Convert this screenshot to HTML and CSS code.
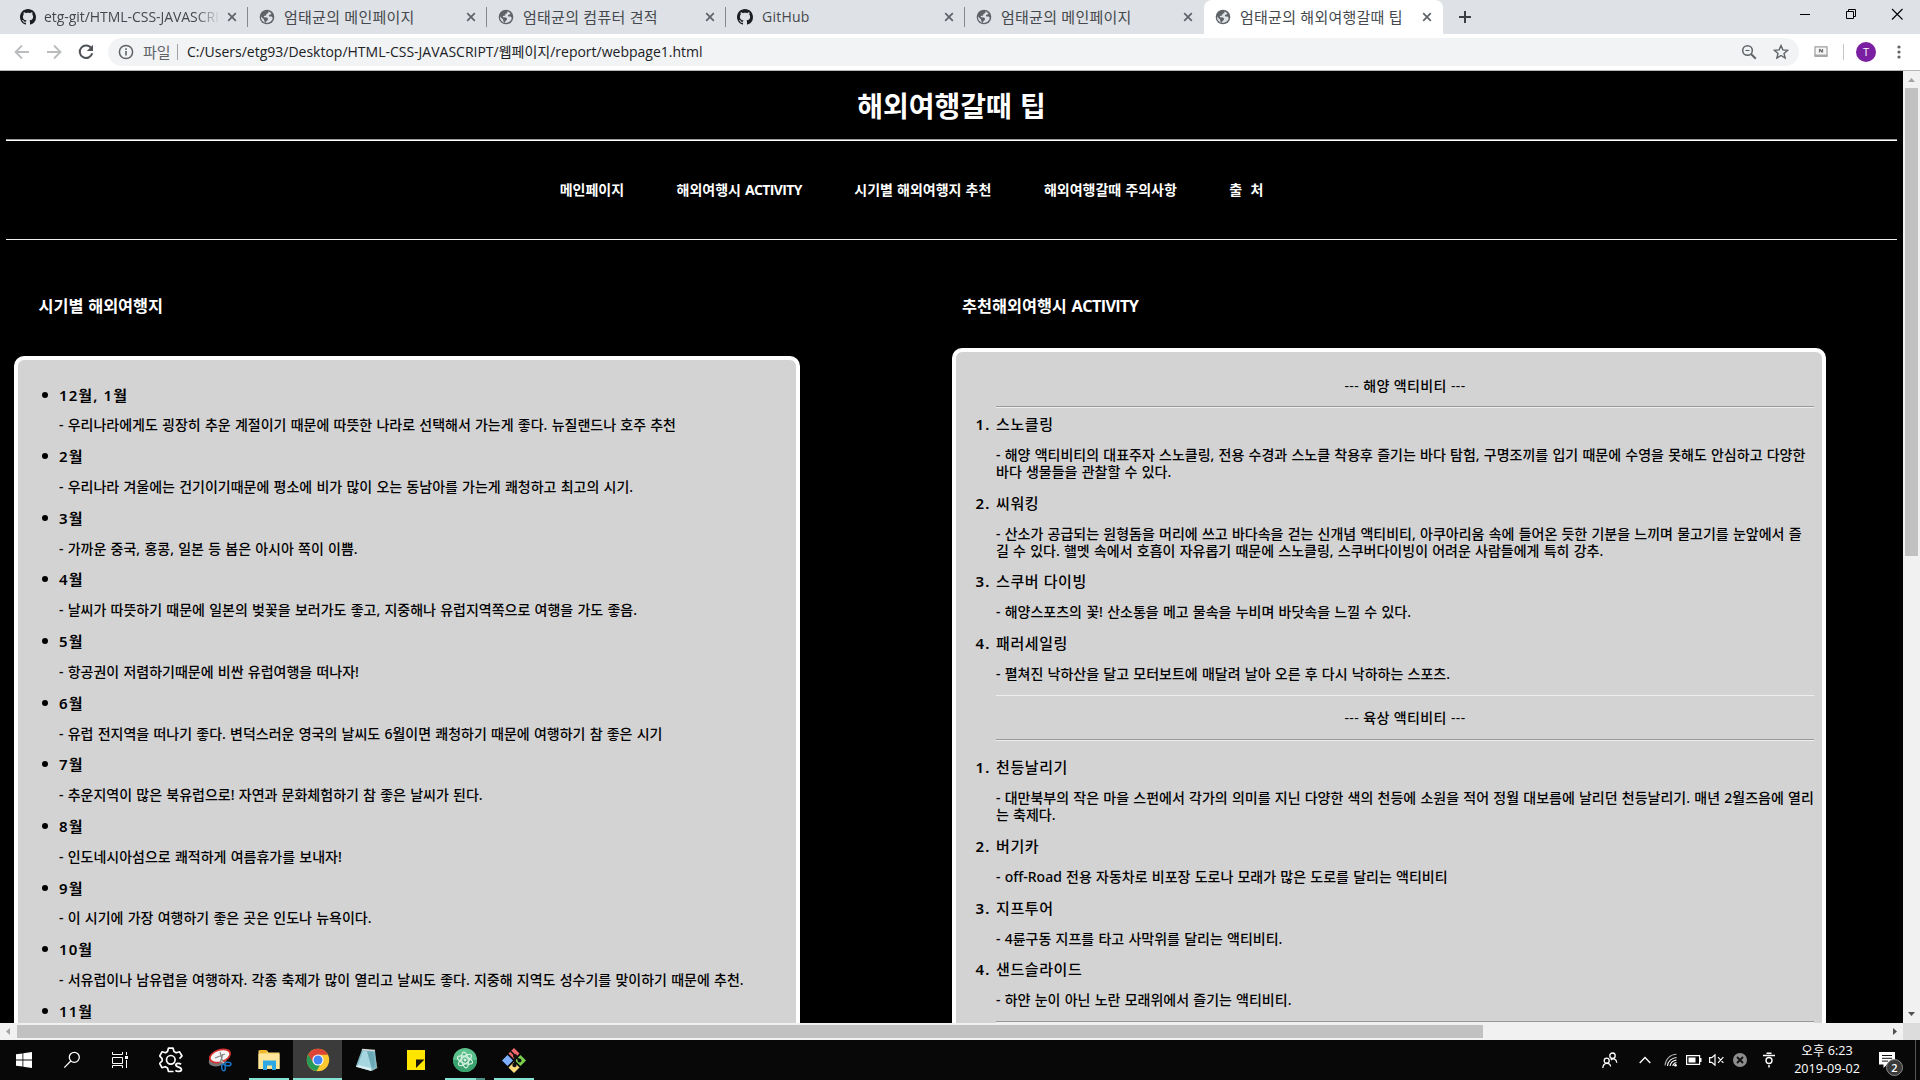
FILE: index.html
```html
<!DOCTYPE html>
<html lang="ko">
<head>
<meta charset="utf-8">
<title>엄태균의 해외여행갈때 팁</title>
<link rel="stylesheet" href="styles.css">
</head>
<body>
<svg class="defs" width="0" height="0" aria-hidden="true">
  <symbol id="github" viewBox="0 0 16 16"><path fill="#1b1f23" d="M8 0C3.58 0 0 3.58 0 8c0 3.54 2.29 6.53 5.47 7.59.4.07.55-.17.55-.38 0-.19-.01-.82-.01-1.49-2.01.37-2.53-.49-2.69-.94-.09-.23-.48-.94-.82-1.13-.28-.15-.68-.52-.01-.53.63-.01 1.08.58 1.23.82.72 1.21 1.87.87 2.33.66.07-.52.28-.87.51-1.07-1.78-.2-3.64-.89-3.64-3.95 0-.87.31-1.59.82-2.15-.08-.2-.36-1.02.08-2.12 0 0 .67-.21 2.2.82.64-.18 1.32-.27 2-.27s1.36.09 2 .27c1.53-1.04 2.2-.82 2.2-.82.44 1.1.16 1.92.08 2.12.51.56.82 1.27.82 2.15 0 3.07-1.87 3.75-3.65 3.95.29.25.54.73.54 1.48 0 1.07-.01 1.93-.01 2.2 0 .21.15.46.55.38A8.01 8.01 0 0 0 16 8c0-4.42-3.58-8-8-8z"/></symbol>
  <symbol id="globe" viewBox="0 0 16 16"><circle cx="8" cy="8" r="7.3" fill="#5f6368"/><path fill="#dee1e6" d="M9.6 2.2 9.3 4 7.4 4.9 7.2 6.5 4.8 7.1 5 8.3 8 8.4 9.2 9.8 8.6 11.2 7.4 12 7.1 14 A6 6 0 0 1 2 7.6 L5 10.4 5.4 12.4 7 13.9 A6 6 0 0 0 13.8 9 L12.6 7.6 10.2 7.4 9.9 6 12.6 5 A6 6 0 0 0 9.6 2.2z"/></symbol>
  <symbol id="close" viewBox="0 0 10 10"><path d="M1.2 1.2l7.6 7.6M8.8 1.2L1.2 8.8" stroke="#5f6368" stroke-width="1.7" fill="none"/></symbol>
</svg>

<div class="tabs">
  <div class="tab"><svg class="fav"><use href="#github"/></svg><span class="tab-title fade">etg-git/HTML-CSS-JAVASCRIPT</span><svg class="x"><use href="#close"/></svg></div>
  <div class="tab"><svg class="fav"><use href="#globe"/></svg><span class="tab-title">엄태균의 메인페이지</span><svg class="x"><use href="#close"/></svg></div>
  <div class="tab"><svg class="fav"><use href="#globe"/></svg><span class="tab-title">엄태균의 컴퓨터 견적</span><svg class="x"><use href="#close"/></svg></div>
  <div class="tab"><svg class="fav"><use href="#github"/></svg><span class="tab-title latin">GitHub</span><svg class="x"><use href="#close"/></svg></div>
  <div class="tab last"><svg class="fav"><use href="#globe"/></svg><span class="tab-title">엄태균의 메인페이지</span><svg class="x"><use href="#close"/></svg></div>
  <div class="tab active"><svg class="fav"><use href="#globe"/></svg><span class="tab-title">엄태균의 해외여행갈때 팁</span><svg class="x"><use href="#close"/></svg></div>
  <svg class="plus" width="14" height="14" viewBox="0 0 14 14"><path d="M7 1v12M1 7h12" stroke="#3c4043" stroke-width="2"/></svg>
  <div class="window-buttons">
    <svg width="46" height="28" viewBox="0 0 46 28"><path d="M18 14.5h10" stroke="#000"/></svg>
    <svg width="46" height="28" viewBox="0 0 46 28"><path d="M18.500 11.500h7v7h-7zM20.500 11.500v-2h7v7h-2" stroke="#000" fill="none"/></svg>
    <svg width="46" height="28" viewBox="0 0 46 28"><path d="M18 9l10.500 10.500M28.500 9L18 19.500" stroke="#000" stroke-width="1.100"/></svg>
  </div>
</div>

<div class="toolbar">
  <div class="nav-buttons">
    <svg width="16" height="16" viewBox="0 0 16 16"><path d="M15 8H2M8 1.500L1.500 8 8 14.500" stroke="#babcbe" stroke-width="1.800" fill="none"/></svg>
    <svg width="16" height="16" viewBox="0 0 16 16"><path d="M1 8h13M8 1.500L14.500 8 8 14.500" stroke="#babcbe" stroke-width="1.800" fill="none"/></svg>
    <svg width="16" height="16" viewBox="0 0 16 16"><path d="M13.500 4.500A6.300 6.300 0 1 0 14.200 9.200" stroke="#4f5358" stroke-width="2" fill="none"/><path d="M15 .8V7H8.800z" fill="#4f5358"/></svg>
  </div>
  <div class="omnibox">
    <svg width="16" height="16" viewBox="0 0 16 16"><circle cx="8" cy="8" r="6.600" stroke="#5f6368" stroke-width="1.500" fill="none"/><path d="M8 7v4.500M8 4.300v1.700" stroke="#5f6368" stroke-width="1.600"/></svg>
    <span class="scheme">파일</span>
    <span class="url">C:/Users/etg93/Desktop/HTML-CSS-JAVASCRIPT/웹페이지/report/webpage1.html</span>
    <svg class="mag" width="16" height="16" viewBox="0 0 16 16"><circle cx="6.500" cy="6.500" r="4.800" stroke="#5f6368" stroke-width="1.500" fill="none"/><path d="M10 10l4.800 4.800" stroke="#5f6368" stroke-width="2"/><path d="M4.500 6.500h4" stroke="#5f6368" stroke-width="1.100"/></svg>
    <svg width="16" height="16" viewBox="0 0 16 16"><path d="M8 1.600l1.900 4.300 4.700.4-3.600 3.100 1.100 4.600L8 11.500 3.900 14 5 9.400 1.400 6.300l4.700-.4z" stroke="#5f6368" stroke-width="1.400" fill="none"/></svg>
  </div>
  <svg class="ext" width="14" height="12" viewBox="0 0 14 12"><path d="M1 .8h12v8.700H1z" stroke="#9b9d9f" stroke-width="1.200" fill="#f7f7f7"/><path d="M.4 8.500h13.200V11H.4z" fill="#a5a7a9"/><path d="M5.500 3v3.500M8.500 3v3.500M5.500 3l3 3.500" stroke="#777" stroke-width="1.300"/></svg>
  <span class="divider"></span>
  <span class="avatar">T</span>
  <svg class="menu" width="4" height="16" viewBox="0 0 4 16"><g fill="#5f6368"><circle cx="2" cy="3" r="1.600"/><circle cx="2" cy="8" r="1.600"/><circle cx="2" cy="13" r="1.600"/></g></svg>
</div>

<div class="viewport">
  <main class="page">
    <h1>해외여행갈때 팁</h1>
    <hr class="rule">
    <nav>
      <a>메인페이지</a><a>해외여행시 <span class="caps">ACTIVITY</span></a><a>시기별 해외여행지 추천</a><a>해외여행갈때 주의사항</a><a>출&nbsp; 처</a>
    </nav>
    <hr class="rule thin">
    <div class="columns">
      <section class="season">
        <h2>시기별 해외여행지</h2>
        <div class="box">
          <ul>
            <li><h3>12월, 1월</h3><p>- 우리나라에게도 굉장히 추운 계절이기 때문에 따뜻한 나라로 선택해서 가는게 좋다. 뉴질랜드나 호주 추천</p></li>
            <li><h3>2월</h3><p>- 우리나라 겨울에는 건기이기때문에 평소에 비가 많이 오는 동남아를 가는게 쾌청하고 최고의 시기.</p></li>
            <li><h3>3월</h3><p>- 가까운 중국, 홍콩, 일본 등 봄은 아시아 쪽이 이쁨.</p></li>
            <li><h3>4월</h3><p>- 날씨가 따뜻하기 때문에 일본의 벚꽃을 보러가도 좋고, 지중해나 유럽지역쪽으로 여행을 가도 좋음.</p></li>
            <li><h3>5월</h3><p>- 항공권이 저렴하기때문에 비싼 유럽여행을 떠나자!</p></li>
            <li><h3>6월</h3><p>- 유럽 전지역을 떠나기 좋다. 변덕스러운 영국의 날씨도 6월이면 쾌청하기 때문에 여행하기 참 좋은 시기</p></li>
            <li><h3>7월</h3><p>- 추운지역이 많은 북유럽으로! 자연과 문화체험하기 참 좋은 날씨가 된다.</p></li>
            <li><h3>8월</h3><p>- 인도네시아섬으로 쾌적하게 여름휴가를 보내자!</p></li>
            <li><h3>9월</h3><p>- 이 시기에 가장 여행하기 좋은 곳은 인도나 뉴욕이다.</p></li>
            <li><h3>10월</h3><p>- 서유럽이나 남유렵을 여행하자. 각종 축제가 많이 열리고 날씨도 좋다. 지중해 지역도 성수기를 맞이하기 때문에 추천.</p></li>
            <li><h3>11월</h3></li>
          </ul>
        </div>
      </section>
      <section class="activity">
        <h2>추천해외여행시 <span class="caps">ACTIVITY</span></h2>
        <div class="box">
          <p class="group">--- 해양 액티비티 ---</p>
          <hr class="groove">
          <ol>
            <li><h3>스노클링</h3><p>- 해양 액티비티의 대표주자 스노클링, 전용 수경과 스노클 착용후 즐기는 바다 탐험, 구명조끼를 입기 때문에 수영을 못해도 안심하고 다양한<br>바다 생물들을 관찰할 수 있다.</p></li>
            <li><h3>씨워킹</h3><p>- 산소가 공급되는 원형돔을 머리에 쓰고 바다속을 걷는 신개념 액티비티, 아쿠아리움 속에 들어온 듯한 기분을 느끼며 물고기를 눈앞에서 즐<br>길 수 있다. 핼멧 속에서 호흡이 자유롭기 때문에 스노클링, 스쿠버다이빙이 어려운 사람들에게 특히 강추.</p></li>
            <li><h3>스쿠버 다이빙</h3><p>- 해양스포츠의 꽃! 산소통을 메고 물속을 누비며 바닷속을 느낄 수 있다.</p></li>
            <li><h3>패러세일링</h3><p>- 펼쳐진 낙하산을 달고 모터보트에 매달려 날아 오른 후 다시 낙하하는 스포츠.</p></li>
          </ol>
          <hr class="groove light">
          <p class="group land">--- 육상 액티비티 ---</p>
          <hr class="groove">
          <ol class="land-list">
            <li><h3>천등날리기</h3><p>- 대만북부의 작은 마을 스펀에서 각가의 의미를 지닌 다양한 색의 천등에 소원을 적어 정월 대보름에 날리던 천등날리기. 매년 2월즈음에 열리<br>는 축제다.</p></li>
            <li><h3>버기카</h3><p>- off-Road 전용 자동차로 비포장 도로나 모래가 많은 도로를 달리는 액티비티</p></li>
            <li><h3>지프투어</h3><p>- 4륜구동 지프를 타고 사막위를 달리는 액티비티.</p></li>
            <li><h3>샌드슬라이드</h3><p>- 하얀 눈이 아닌 노란 모래위에서 즐기는 액티비티.</p></li>
          </ol>
          <hr class="groove end">
        </div>
      </section>
    </div>
  </main>
  <div class="vscroll">
    <svg width="17" height="17" viewBox="0 0 17 17"><path d="M5 11h7L8.500 7z" fill="#a3a3a3"/></svg>
    <span class="vthumb"></span>
    <svg width="17" height="17" viewBox="0 0 17 17"><path d="M5 6h7l-3.500 4z" fill="#505050"/></svg>
  </div>
  <div class="hscroll">
    <svg width="17" height="17" viewBox="0 0 17 17"><path d="M10 5v7L6 8.500z" fill="#a3a3a3"/></svg>
    <span class="hthumb"></span>
    <svg width="17" height="17" viewBox="0 0 17 17"><path d="M7 5v7l4-3.500z" fill="#505050"/></svg>
  </div>
  <div class="corner"></div>
</div>

<div class="taskbar">
  <div class="sys"><svg width="16" height="16" viewBox="0 0 16 16"><path fill="#fff" d="M0 2.300l6.500-.9v6.100H0zM7.300 1.300L16 0v7.500H7.300zM0 8.400h6.500v6.200L0 13.700zM7.300 8.400H16V16l-8.700-1.200z"/></svg></div>
  <div class="sys"><svg width="18" height="18" viewBox="0 0 18 18"><circle cx="11.300" cy="6.300" r="5" stroke="#fff" stroke-width="1.300" fill="none"/><path d="M7.800 10L1.300 16.600" stroke="#fff" stroke-width="1.300"/></svg></div>
  <div class="sys"><svg width="16" height="16" viewBox="0 0 16 16"><path d="M.5 0v2.500h10V0M.5 5.500h10v6H.5zM.5 16v-2.500h10V16M14.500 0v3M14.500 8v8" stroke="#fff" fill="none"/><path d="M13 4h3v3h-3z" fill="#fff"/></svg></div>
  <div class="app gear"><svg width="24" height="26" viewBox="0 0 24 26"><path d="M14.500 24.500h-5l-1-3.500-2.200-1.300-3.400 1L.7 16.500l2.400-2.600v-2.300L.7 9 3 4.800l3.500 1L8.500 4.500l1-3.400h4.500l1 3.400 2.200 1.300 3.400-1L23 9l-2.500 2.600" stroke="#fff" stroke-width="1.700" fill="none" stroke-linejoin="round"/><circle cx="11.800" cy="12.800" r="4.300" stroke="#fff" stroke-width="1.700" fill="none"/><path d="M22 17.300c-1.200-1.200-5.200-1.500-5.200.7 0 2.500 5.600 1.600 5.600 4.400 0 2.600-4.400 2.400-6 .9" stroke="#fff" stroke-width="1.800" fill="none"/></svg></div>
  <div class="app"><svg width="24" height="24" viewBox="0 0 24 24"><ellipse cx="10" cy="12" rx="9.500" ry="6" fill="#777" transform="rotate(-18 10 12)"/><ellipse cx="12" cy="8" rx="10.500" ry="6" fill="#f6f6f6" stroke="#d9342f" stroke-width="1.700" transform="rotate(-18 12 8)"/><path d="M7 10l10-4M12 4l3 11M15 6l-3 9" stroke="#888" stroke-width="1.200"/><path d="M13 13l3 2" stroke="#ddd"/><ellipse cx="20" cy="16" rx="3" ry="1.800" stroke="#1a74c4" stroke-width="1.500" fill="none"/><ellipse cx="15.500" cy="19.500" rx="1.800" ry="3.200" stroke="#1a74c4" stroke-width="1.500" fill="none" transform="rotate(-8 15.500 19.500)"/></svg></div>
  <div class="app open"><svg width="24" height="22" viewBox="0 0 24 22"><path d="M1.500 1.500h8.500l1.500 2H22.500V20h-21z" fill="#f8d775"/><path d="M2.500 1h7v3h-7z" fill="#f1b62c"/><path d="M1.500 5h21v15h-21z" fill="#ffe69a"/><path d="M6 21v-9.500h13V21h-4v-4.500h-5V21z" fill="#2da8e4"/></svg></div>
  <div class="app open current"><svg width="24" height="24" viewBox="0 0 24 24"><circle cx="12" cy="12" r="11.200" fill="#fbc831"/><path d="M12 12L2.300 6.400A11.200 11.200 0 0 0 10.500 23.100l5.300-9z" fill="#279a55"/><path d="M12 6.700h9.900A11.200 11.200 0 0 0 2.300 6.400l4.900 8.300z" fill="#dc4437"/><circle cx="12" cy="12" r="5.600" fill="#fff"/><circle cx="12" cy="12" r="4.500" fill="#4285f4"/></svg></div>
  <div class="app"><svg width="24" height="24" viewBox="0 0 24 24"><path d="M19 3l3.500 17-6 3z" fill="#a27837"/><path d="M7 1.500l13 1 2 17.500-5.500 3L.8 18.500z" fill="#7db6c4"/><path d="M8 3l10.500.8 1 14.700-3.500 1.500L3 16.700z" fill="#a6d7e1"/><path d="M3 16.700L16.500 20l-.4 3L.8 18.800z" fill="#d8eef2"/><path d="M12 3.300l6.500.5 1.500 14.700-3.500 1.500z" fill="#6aa8b6"/><path d="M7 1.500l13 1" stroke="#dadada" stroke-width="1.500"/></svg></div>
  <div class="app"><svg width="18" height="20" viewBox="0 0 18 20"><path d="M0 0h18v20H0z" fill="#ffe500"/><path d="M9 18v-8.500h8.500z" fill="#17140a"/></svg></div>
  <div class="app open multi"><svg width="24" height="24" viewBox="0 0 24 24"><circle cx="12" cy="12" r="12" fill="#5cc08c"/><path d="M0 12a12 12 0 0 0 24 0" fill="#3aa26f"/><g fill="none" stroke="#d5f0e0" stroke-width="1.200"><ellipse cx="12" cy="12" rx="8" ry="3.300" transform="rotate(20 12 12)"/><ellipse cx="12" cy="12" rx="8" ry="3.300" transform="rotate(80 12 12)"/><ellipse cx="12" cy="12" rx="8" ry="3.300" transform="rotate(140 12 12)"/></g><circle cx="12" cy="12" r="1.500" fill="#d5f0e0"/></svg></div>
  <div class="app open"><svg width="24" height="25" viewBox="0 0 24 24"><path d="M12-.5l5.500 5.500-5.500 5.500L6.500 5z" fill="#f0686c"/><path d="M5.500 6.500L11 12l-5.500 5.500L0 12z" fill="#7fb0ff"/><path d="M18.500 6.500L24 12l-5.500 5.500L13 12z" fill="#7bd04f"/><path d="M12 13.500l5.500 5.500-5.500 5.500L6.500 19z" fill="#ffd97e"/><path d="M8.500 2.500L13 7v9M13 8l5 4" stroke="#111" stroke-width="1.700" fill="none"/><circle cx="13" cy="7.500" r="2" fill="#111"/><circle cx="12.500" cy="16.500" r="2.200" fill="#111"/><circle cx="17.500" cy="12" r="2" fill="#111"/></svg></div>
  <div class="tray">
    <svg width="16" height="17" viewBox="0 0 16 17"><g fill="none" stroke="#fff" stroke-width="1.300"><circle cx="10.500" cy="3.700" r="2.700"/><circle cx="4.700" cy="8.700" r="2.500"/><path d="M.8 16c.3-6 7.500-6 7.800-1.500M8.800 8c2.500-2 5.600-1 6 2.700"/></g></svg>
    <svg class="caret" width="12" height="8" viewBox="0 0 12 8"><path d="M.7 7L6 1.500 11.300 7" fill="none" stroke="#fff" stroke-width="1.300"/></svg>
    <svg class="wifi" width="13" height="14" viewBox="0 0 13 14"><g fill="none" stroke="#fff" stroke-width="1.100"><path d="M1 12.500C1.500 6 6 1.500 12.500 1.300" stroke="#aaa"/><path d="M3.500 13C4 8.500 7.500 5 12.500 4.500M6 13c.5-3 3-5.500 6.500-6M8.800 13c.3-1.700 1.600-3 3.700-3.500"/></g><circle cx="11.500" cy="12.200" r="1.300" fill="#fff"/></svg>
    <svg class="bat" width="16" height="10" viewBox="0 0 16 10"><path d="M.6.6h13v8.800H.6z" fill="none" stroke="#fff" stroke-width="1.200"/><path d="M2.500 2.500h7v5h-7zM14 3h1.500v4H14z" fill="#fff"/></svg>
    <svg class="mute" width="16" height="12" viewBox="0 0 16 12"><path d="M.6 3.700h2.200L6 .8v10.400L2.800 8.300H.6zM9 3.200l5.400 5.600M14.400 3.200L9 8.800" fill="none" stroke="#fff" stroke-width="1.200"/></svg>
    <svg class="off" width="14" height="14" viewBox="0 0 14 14"><circle cx="7" cy="7" r="7" fill="#8d8d8d"/><path d="M4 4l6 6M10 4l-6 6" stroke="#111" stroke-width="1.800"/></svg>
    <svg class="ime" width="14" height="16" viewBox="0 0 14 16"><path d="M4.500 1.200h5M1 3.500h12M7 13v2.500" stroke="#fff" stroke-width="1.500"/><circle cx="7" cy="8.500" r="3" fill="none" stroke="#fff" stroke-width="1.400"/></svg>
    <div class="clock"><span>오후 6:23</span><span>2019-09-02</span></div>
    <div class="notice"><svg width="16" height="16" viewBox="0 0 16 16"><path d="M0 0h16v12.500h-8L4.500 16v-3.500H0z" fill="#fff"/><path d="M3 3.500h10M3 6.300h10M3 9.100h6" stroke="#111"/></svg><span class="badge">2</span></div>
    <span class="peek"></span>
  </div>
</div>
</body>
</html>
```
FILE: styles.css
```css
* { box-sizing: border-box; margin: 0; padding: 0; }
body {
  width: 1920px; height: 1080px; overflow: hidden;
  display: flex; flex-direction: column;
  font-family: "Open Sans", "Noto Sans CJK KR", sans-serif;
  background: #000; color: #000;
}
svg { display: block; flex: none; }
.defs { position: absolute; }

/* tab strip */
.tabs { height: 34px; flex: none; background: #dee1e6; display: flex; align-items: center; padding-left: 9px; }
.tab { width: 239px; height: 34px; display: flex; align-items: center; padding: 0 11.500px 0 11px; position: relative; flex: none; }
.tab::after { content: ""; position: absolute; right: 0; top: 7px; height: 20px; width: 1px; background: #85888c; }
.tab.last::after, .tab.active::after { display: none; }
.tab.active { background: #fff; border-radius: 8px 8px 0 0; }
.fav { width: 16px; height: 16px; }
.x { width: 10px; height: 10px; }
.tab-title { flex: 1; margin-left: 9px; margin-right: 7px; font-size: 15px; letter-spacing: .25px; line-height: 20px; color: #45494d; white-space: nowrap; overflow: hidden; }
.tab-title.latin { font-size: 14px; }
.tab-title.fade { margin-left: 8px; font-size: 14px; letter-spacing: -.05px; -webkit-mask-image: linear-gradient(90deg, #000 86%, transparent); mask-image: linear-gradient(90deg, #000 86%, transparent); }
.plus { margin-left: 15px; }
.window-buttons { margin-left: auto; display: flex; height: 34px; }

/* toolbar */
.toolbar { height: 37px; flex: none; background: #fff; border-bottom: 1px solid #b6b4b6; display: flex; align-items: center; padding-bottom: 1px; }
.nav-buttons { width: 108px; display: flex; gap: 16px; padding-left: 14px; flex: none; }
.omnibox { width: 1691px; height: 28px; flex: none; border-radius: 14px; background: #f1f3f4; display: flex; align-items: center; padding: 0 10px; font-size: 14px; line-height: 20px; }
.scheme { color: #5f6368; margin-left: 9px; width: 35px; border-right: 1px solid #a0a3a6; line-height: 16px; white-space: nowrap; font-size: 15px; }
.url { margin-left: 9px; color: #202124; white-space: nowrap; letter-spacing: -.005px; }
.mag { margin-left: auto; margin-right: 16px; }
.ext { margin-left: 15px; }
.divider { width: 1px; height: 16px; background: #c4c6c8; margin: 0 12px 0 15px; }
.avatar { width: 20px; height: 20px; border-radius: 50%; background: #7b1fa2; color: #fff; font-size: 11px; line-height: 20px; text-align: center; }
.menu { margin-left: 20.500px; }

/* browser viewport */
.viewport { height: 969px; flex: none; display: grid; grid-template: 952px 17px / 1903px 17px; }
.page { overflow: hidden; padding: 0 6px; color: #fff; }
h1 { height: 68px; padding-top: 15px; font-size: 28px; line-height: 40px; font-weight: 700; text-align: center; word-spacing: 1px; }
.rule { border: 0; height: 2px; background: linear-gradient(#9a9a9a 50%, #fff 50%); }
.rule.thin { height: 1px; background: #eee; }
nav { height: 98px; display: flex; justify-content: center; gap: 52.500px; padding-top: 39px; padding-right: 80px; font-size: 14px; line-height: 20px; font-weight: 700; white-space: nowrap; word-spacing: .5px; }
.caps { letter-spacing: -.65px; }
.columns { display: flex; align-items: flex-start; }
h2 { font-size: 16.300px; line-height: 24px; font-weight: 700; white-space: nowrap; word-spacing: .5px; }
.box { background: #d3d3d3; border: 4px solid #fff; border-radius: 10px; color: #000; height: 740px; }
.season { width: 786px; margin-left: 8px; padding-top: 54px; }
.season h2 { margin-left: 24.500px; margin-bottom: 38px; }
.season .box { padding: 25.500px 0 0 41px; }
.activity { width: 874px; margin-left: 152px; padding-top: 54px; }
.activity h2 { margin-left: 10px; margin-bottom: 30px; }
.activity .box { padding: 24px 8px 0 40px; }
ul, ol { list-style: none; font-family: "Noto Sans", "Noto Sans CJK KR", sans-serif; }
ol { counter-reset: item; padding-top: 7px; }
li { margin-bottom: 13.600px; }
h3 { margin-top: -1px; font-size: 15px; line-height: 20px; font-weight: 500; letter-spacing: .6px; white-space: nowrap; }
ul h3 { font-weight: 600; letter-spacing: 1.100px; }
ul h3::before { content: ""; display: inline-block; width: 6px; height: 6px; border-radius: 50%; background: #000; margin-left: -17.500px; margin-right: 11.500px; vertical-align: 3px; }
ol li { counter-increment: item; }
ol h3::before { content: counter(item) "."; display: inline-block; width: 20.500px; margin-left: -20.500px; font-weight: 600; letter-spacing: 1.200px; }
li p { margin-top: 11.950px; font-size: 14px; line-height: 17.100px; font-weight: 500; white-space: nowrap; word-spacing: .58px; }
.group { height: 30px; line-height: 20px; font-size: 14px; font-weight: 500; text-align: center; letter-spacing: .4px; }
.group.land { height: 43px; padding-top: 12px; }
.groove { border: 0; height: 2px; background: linear-gradient(#999 50%, #eee 50%); }
.groove.light { height: 1px; background: #eee; margin-top: -1px; }
.groove.end { margin-top: -1px; }
.land-list { padding-top: 17.700px; }

/* scrollbars */
.vscroll, .hscroll { background: #f1f1f1; display: flex; }
.vscroll { flex-direction: column; }
.vthumb { width: 13px; height: 468px; margin: 0 2px auto; background: #c1c1c1; }
.hthumb { width: 1466px; height: 13px; margin: 2px auto 2px 0; background: #c1c1c1; }
.corner { background: #dcdcdc; }

/* taskbar */
.taskbar { height: 40px; flex: none; background: #080808; display: flex; }
.sys, .app { display: flex; align-items: center; justify-content: center; flex: none; height: 40px; }
.sys { width: 48px; }
.app { width: 49px; }
.gear { margin-left: 2px; }
.open { background: linear-gradient(#84e3d2, #84e3d2) center bottom / 40px 2px no-repeat; }
.current { background: linear-gradient(#84e3d2, #84e3d2) center bottom / 49px 2px no-repeat, #3b3b3b; }
.multi { background: linear-gradient(90deg, #84e3d2 77%, #4d9084 77%) center bottom / 40px 2px no-repeat; }
.tray { margin-left: auto; display: flex; align-items: center; color: #fff; }
.caret { margin-left: 21px; }
.wifi { margin-left: 13px; }
.bat { margin-left: 9px; }
.mute { margin-left: 7px; }
.off { margin-left: 8px; }
.ime { margin-left: 15px; }
.clock { width: 88px; margin-left: 7px; display: flex; flex-direction: column; align-items: center; font-size: 12.600px; line-height: 18px; white-space: nowrap; }
.notice { position: relative; margin-left: 8px; width: 16px; }
.badge { position: absolute; left: 7px; top: 7px; width: 17px; height: 17px; border-radius: 50%; background: #3a3a3a; border: 1px solid #8a8a8a; font-size: 11px; line-height: 15px; text-align: center; font-weight: 600; }
.peek { width: 1px; height: 40px; background: #555; margin-left: 20px; margin-right: 4px; }
```
